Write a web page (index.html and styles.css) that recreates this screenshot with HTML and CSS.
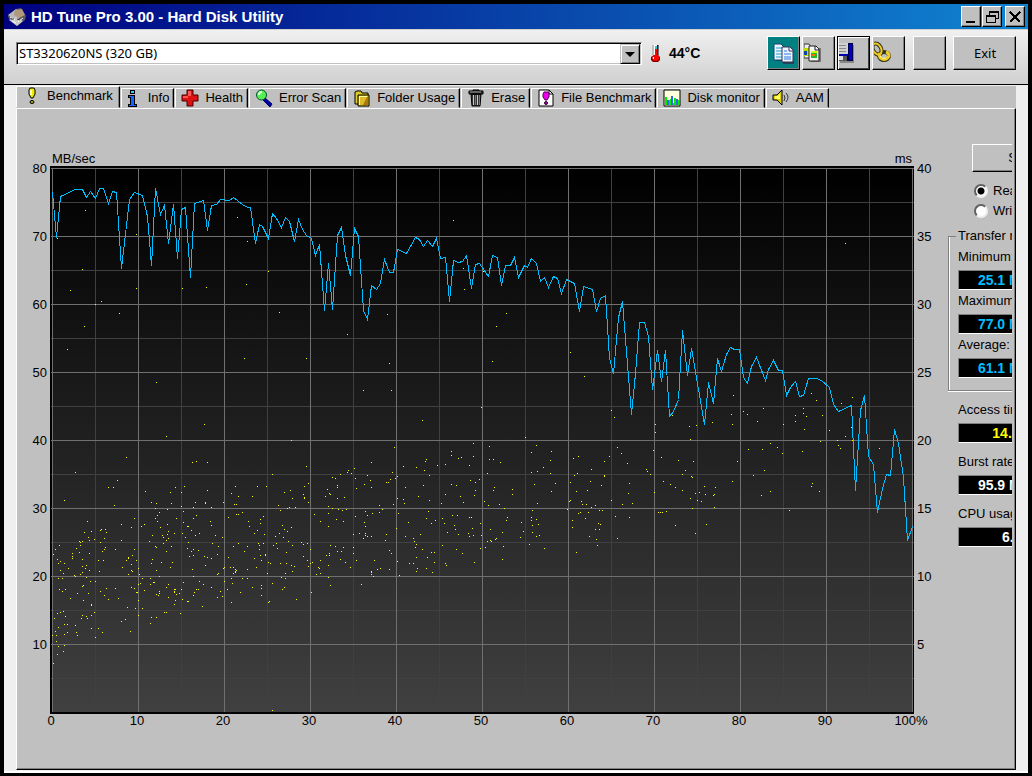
FILE: index.html
```html
<!DOCTYPE html>
<html lang="en">
<head>
    <meta charset="UTF-8">
    <meta name="viewport" content="width=device-width, initial-scale=1.0">
    <title>HD Tune Pro 3.00 - Hard Disk Utility</title>
    <link rel="stylesheet" href="styles.css">
</head>
<body>
    <div class="window">
        <header class="titlebar">
            <svg class="app-icon" viewBox="0 0 20 20">
                <path d="M1 9L9 2l5-1 5 8-1 4-8 6-8-7z" fill="#5a5a5a"/>
                <path d="M1 8l8-6 7 5-7 7z" fill="#b8b8b8"/>
                <path d="M8 3l7-1 3 6-6 3-5-3z" fill="#b0987c"/>
                <path d="M2 13l6-3 8 4-6 5z" fill="#c9c9c9"/>
                <path d="M3 10l5 3M11 15l5-4M5 14l4 2" stroke="#fff" fill="none"/>
                <path d="M4 12h3M10 12l3 1" stroke="#333" fill="none"/>
            </svg>
            <h1>HD Tune Pro 3.00 - Hard Disk Utility</h1>
            <div class="window-buttons">
                <button aria-label="Minimize"><svg viewBox="0 0 16 16"><path d="M3 12h9v2H3z"/></svg></button>
                <button aria-label="Restore"><svg viewBox="0 0 16 16"><path d="M5 2h10v8h-3v4H2V6h3zM6 4v2h6v3h2V4zM3 8v5h8V8z" fill-rule="evenodd"/></svg></button>
                <button class="close" aria-label="Close"><svg viewBox="0 0 16 16"><path d="M3 3l10 10M13 3L3 13" stroke="#000" stroke-width="2"/></svg></button>
            </div>
        </header>

        <div class="toolbar">
            <div class="drive">
                <select aria-label="Drive">
                    <option>ST3320620NS (320 GB)</option>
                </select>
                <span class="drive-arrow"></span>
            </div>
            <div class="temperature">
                <svg viewBox="0 0 11 18">
                    <path d="M4 1h4v10l2 2v3l-2 2H3l-2-2v-3l3-2z" fill="#7a0000"/>
                    <path d="M4 1h3v10H4z" fill="#fff"/>
                    <path d="M5 2h2v4H5z" fill="#2cd"/>
                    <path d="M5 5h3v6l1 2v2l-2 2H4l-2-2v-2l3-2z" fill="#f00"/>
                    <path d="M3 1v10M3 13v1" stroke="#999"/>
                    <path d="M8 1v10" stroke="#000"/>
                    <path d="M3 13h1v2H3z" fill="#fff"/>
                </svg>
                <span>44°C</span>
            </div>
            <div class="tools">
                <button class="tool copy-text" aria-label="Copy text">
                    <svg viewBox="0 0 24 24">
                        <path d="M5 5h8v15h10v3H12v-3H5z" fill="#245"/>
                        <path d="M3 3h7l3 3v13H3z" fill="#eaf6ff" stroke="#147"/>
                        <path d="M5 7h6M5 10h6M5 13h6M5 16h6" stroke="#29c"/>
                        <path d="M11 6h8l3 3v12H11z" fill="#eaf6ff" stroke="#335"/>
                        <path d="M18 6v4h4" fill="#fff" stroke="#335"/>
                        <path d="M13 10h3M13 13h7M13 16h7M13 18h7" stroke="#37d"/>
                    </svg>
                </button>
                <button class="tool" aria-label="Copy screenshot">
                    <svg viewBox="0 0 24 24">
                        <path d="M7 7h10v14H7z" fill="#777"/>
                        <path d="M0 3h5l2 3v11H0z" fill="#eee" stroke="#333"/>
                        <path d="M0 7h5v8H0z" fill="#bd0"/>
                        <path d="M0 10h3v4H0z" fill="#14a"/>
                        <path d="M5 5h7l3 3v12H5z" fill="#f4f4f4" stroke="#222"/>
                        <path d="M11 5v4h4" fill="none" stroke="#222"/>
                        <path d="M7 10h6v7H7z" fill="#2b2"/>
                        <path d="M7 10h6v2H7z" fill="#cf0"/>
                        <path d="M8 13h3v2H8z" fill="#e70"/>
                    </svg>
                </button>
                <button class="tool focused" aria-label="Save screenshot">
                    <svg viewBox="0 0 24 24">
                        <path d="M1 4h14v18H1z" fill="#888"/>
                        <path d="M0 2h14v18H0z" fill="#00004a"/>
                        <path d="M10 3h3v16h-3z" fill="#0000c8"/>
                        <path d="M0 2h9v11H0z" fill="#d0d0d0"/>
                        <path d="M0 4.500h7M0 7.500h7M0 10.500h7" stroke="#888"/>
                        <path d="M0 13h9v2H0z" fill="#00a"/>
                        <path d="M0 15h8v5H0z" fill="#555"/>
                        <path d="M0 15h4v4H0z" fill="#ddd"/>
                    </svg>
                </button>
                <button class="tool" aria-label="Options">
                    <svg viewBox="0 0 24 24">
                        <g fill="none">
                            <ellipse cx="3" cy="8" rx="4" ry="6" transform="rotate(-30 3 8)" stroke="#332" stroke-width="4"/>
                            <ellipse cx="10" cy="15" rx="5" ry="4" stroke="#332" stroke-width="4"/>
                            <ellipse cx="3" cy="8" rx="4" ry="6" transform="rotate(-30 3 8)" stroke="#ec2" stroke-width="2"/>
                            <path d="M6 12q-2 4 2 6t7-3q0-3-3-4" stroke="#ec2" stroke-width="3"/>
                            <path d="M6 15q2 4 6 2" stroke="#ff9"/>
                        </g>
                    </svg>
                </button>
                <button class="tool blank" aria-label="Extra"></button>
                <button class="tool exit">Exit</button>
            </div>
        </div>

        <main class="content">
            <nav class="tabs" role="tablist">
                <button class="tab active" role="tab" aria-selected="true">
                    <svg viewBox="0 0 18 18">
                        <path d="M7 1h4l1 2v4l-2 4H8L6 7V3z" fill="#ee0" stroke="#000"/>
                        <path d="M7 3h2v5H7z" fill="#ffb"/>
                        <ellipse cx="9" cy="15" rx="2" ry="1.500" fill="#aa0" stroke="#000"/>
                    </svg>
                    Benchmark
                </button>
                <button class="tab narrow" role="tab">
                    <svg viewBox="0 0 12 18">
                        <path d="M3 1h5v4H3zM1 6h7v9h2v3H1v-3h2V9H1z" fill="#000"/>
                        <path d="M4 2h3v2H4z" fill="#3cf"/>
                        <path d="M2 7h5v9h2v1H2v-1h2V8H2z" fill="#16f"/>
                    </svg>
                    Info
                </button>
                <button class="tab" role="tab">
                    <svg viewBox="0 0 18 18">
                        <path d="M6 1h6v5h5v6h-5v5H6v-5H1V6h5z" fill="#d11" stroke="#400"/>
                        <path d="M7 2h3v5H2v2h5V2" fill="#f55"/>
                    </svg>
                    Health
                </button>
                <button class="tab" role="tab">
                    <svg viewBox="0 0 18 18">
                        <path d="M10 9l7 6-2 3-7-7z" fill="#00a" stroke="#005"/>
                        <circle cx="6.500" cy="6" r="5" fill="#5e5" stroke="#052"/>
                        <path d="M4 6q0-3 3-3" fill="none" stroke="#dfd" stroke-width="2"/>
                    </svg>
                    Error Scan
                </button>
                <button class="tab" role="tab">
                    <svg viewBox="0 0 18 18">
                        <path d="M2 15V3l2-1h4l1 2h6v11z" fill="#dc2" stroke="#000"/>
                        <path d="M5 6h11v11H5z" fill="#db2" stroke="#000"/>
                        <path d="M6 7h8v1H6zM6 7h1v9H6z" fill="#ff9"/>
                        <path d="M14 8h1v8h-5z" fill="#a71"/>
                    </svg>
                    Folder Usage
                </button>
                <button class="tab" role="tab">
                    <svg viewBox="0 0 18 18">
                        <path d="M2 2h4V1h6v1h4v3H2zM4 5h10l-1 12H5z" fill="#333" stroke="#000"/>
                        <path d="M3 3h11" stroke="#999"/>
                        <path d="M6.500 6v10M10.500 6v10" stroke="#ccc"/>
                        <path d="M8.500 6v10M12.500 6v10" stroke="#777"/>
                    </svg>
                    Erase
                </button>
                <button class="tab" role="tab">
                    <svg viewBox="0 0 18 18">
                        <path d="M2 1h10l4 4v12H2z" fill="#fff" stroke="#000"/>
                        <path d="M12 1v4h4" fill="none" stroke="#000"/>
                        <path d="M7 3h4l1 2v3l-2 3H8L6 8V5z" fill="#e0e" stroke="#505"/>
                        <circle cx="9" cy="14" r="1.500" fill="#a0a" stroke="#303"/>
                    </svg>
                    File Benchmark
                </button>
                <button class="tab" role="tab">
                    <svg viewBox="0 0 18 18">
                        <path d="M1 1h16v16H1z" fill="#ffd" stroke="#000"/>
                        <path d="M2 8h2v3h3v-1h2v4h2V9h2v2h3v5H2z" fill="#0e0"/>
                        <path d="M4 11h2v5H4zM8 7h2v9H8zM13 10h2v6h-2z" fill="#36e"/>
                    </svg>
                    Disk monitor
                </button>
                <button class="tab" role="tab">
                    <svg viewBox="0 0 18 18">
                        <path d="M1 6h4l5-5v15l-5-5H1z" fill="#dc0" stroke="#000"/>
                        <path d="M3 7h3l2-3v6H3z" fill="#ff6"/>
                        <path d="M12 6q2 3 0 6M14 4q4 4 0 9" fill="none" stroke="#333"/>
                    </svg>
                    AAM
                </button>
            </nav>

            <section class="panel">
                <div class="units">
                    <span>MB/sec</span>
                    <span>ms</span>
                </div>
                <div class="scale scale-left">
                    <span>80</span><span>70</span><span>60</span><span>50</span><span>40</span><span>30</span><span>20</span><span>10</span>
                </div>
                <svg id="chart" viewBox="-2 -2 864 548" preserveAspectRatio="none">
                    <defs>
                        <linearGradient id="plotFill" x1="0" y1="0" x2="0" y2="1">
                            <stop offset="0" stop-color="#000"/>
                            <stop offset="1" stop-color="#404040"/>
                        </linearGradient>
                    </defs>
                    <rect x="-2" y="-2" width="864" height="548" fill="#000"/>
                    <rect x="0" y="0" width="860" height="544" fill="url(#plotFill)"/>
                    <path id="minorGrid"/>
                    <path id="majorGrid"/>
                    <path id="accessDots"/>
                    <polyline id="transferLine"/>
                </svg>
                <div class="scale scale-right">
                    <span>40</span><span>35</span><span>30</span><span>25</span><span>20</span><span>15</span><span>10</span><span>5</span>
                </div>
                <div class="scale-bottom">
                    <span>0</span><span>10</span><span>20</span><span>30</span><span>40</span><span>50</span><span>60</span><span>70</span><span>80</span><span>90</span><span>100%</span>
                </div>

                <aside class="results">
                    <button class="start">Start</button>
                    <label class="mode"><input type="radio" name="mode" checked>Read</label>
                    <label class="mode"><input type="radio" name="mode">Write</label>
                    <fieldset>
                        <legend>Transfer rate</legend>
                        <div class="result">Minimum:<output class="rate">25.1 MB/sec</output></div>
                        <div class="result">Maximum:<output class="rate">77.0 MB/sec</output></div>
                        <div class="result">Average:<output class="rate">61.1 MB/sec</output></div>
                    </fieldset>
                    <div class="result single">Access time:<output class="access">14.2 ms</output></div>
                    <div class="result single">Burst rate:<output>95.9 MB/sec</output></div>
                    <div class="result single">CPU usage:<output>6.0%</output></div>
                </aside>
            </section>
        </main>
    </div>

    <script src="chart.js"></script>
</body>
</html>
```

FILE: styles.css
```css
* {
    box-sizing: border-box;
}

body {
    margin: 0;
    background: #000;
    color: #000;
    font-family: "Liberation Sans", Arial, sans-serif;
    font-size: 13px;
    line-height: 14px;
}

button {
    font: inherit;
    color: inherit;
    padding: 0;
}

.window {
    display: flex;
    flex-direction: column;
    min-height: 100vh;
    border: 4px solid #000;
    border-bottom-width: 3px;
    background: #efefef;
}

/* Title bar */
.titlebar {
    display: flex;
    align-items: center;
    height: 26px;
    padding: 0 3px;
    background: linear-gradient(to right, #000080, #1084d0);
    border-bottom: 1px solid #d0d0d0;
    color: #fff;
}

.titlebar h1 {
    flex: 1;
    margin: 0 0 0 4px;
    font-size: 15px;
    line-height: 20px;
}

.app-icon {
    width: 20px;
    height: 20px;
}

.window-buttons {
    display: flex;
    gap: 1px;
}

.window-buttons button {
    width: 20px;
    height: 21px;
    background: #c0c0c0;
    border: 1px solid;
    border-color: #fff #000 #000 #fff;
    box-shadow: inset -1px -1px #808080;
}

.window-buttons .close {
    margin-left: 2px;
}

.window-buttons svg {
    display: block;
    width: 16px;
    height: 16px;
    margin: auto;
    shape-rendering: crispEdges;
}

/* Toolbar */
.toolbar {
    display: flex;
    align-items: center;
    padding: 6px 12px 14px;
    background: linear-gradient(#f0f0f0, #d0d0d0);
    border-bottom: 1px solid #000;
}

.drive {
    position: relative;
    flex: 1;
}

.drive select {
    display: block;
    appearance: none;
    width: 100%;
    height: 23px;
    padding: 0 24px 0 2px;
    background: #fff;
    color: #000;
    border: 1px solid;
    border-color: #808080 #fff #fff #808080;
    border-radius: 0;
    box-shadow: inset 1px 1px #000, inset -1px -1px #c0c0c0;
    font-family: "Noto Sans", sans-serif;
    font-size: 13px;
}

.drive-arrow {
    position: absolute;
    top: 2px;
    right: 2px;
    width: 20px;
    height: 20px;
    background: #c0c0c0;
    border: 1px solid;
    border-color: #c0c0c0 #000 #000 #c0c0c0;
    box-shadow: inset 1px 1px #fff, inset -1px -1px #808080;
    pointer-events: none;
}

.drive-arrow::after {
    content: "";
    position: absolute;
    top: 7px;
    left: 4px;
    border: 5px solid transparent;
    border-top: 5px solid #000;
    border-bottom: 0;
}

.temperature {
    display: flex;
    align-items: center;
    gap: 8px;
    width: 125px;
    padding-left: 8px;
    font-size: 14px;
    font-weight: bold;
}

.temperature svg {
    width: 11px;
    height: 18px;
}

.tools {
    display: flex;
    gap: 2px;
}

.tool {
    width: 33px;
    height: 34px;
    padding-left: 1px;
    background: #c0c0c0;
    border: 1px solid;
    border-color: #fff #000 #000 #fff;
    box-shadow: inset -1px -1px #808080;
    font-family: "Noto Sans", sans-serif;
}

.tool svg {
    display: block;
    width: 24px;
    height: 24px;
    overflow: hidden;
}

.copy-text {
    padding-left: 3px;
    background: #008080;
}

.focused {
    border-color: #000;
    box-shadow: inset 1px 1px #fff, inset -1px -1px #404040;
}

.blank {
    margin-left: 6px;
}

.exit {
    width: 63px;
    margin-left: 5px;
}

/* Tabs */
.content {
    display: flex;
    flex-direction: column;
    flex: 1;
    padding: 1px 12px;
    border-bottom: 2px solid #fff;
}

.tabs {
    display: flex;
    align-items: flex-end;
    height: 22px;
    background: #c0c0c0;
}

.tab {
    display: flex;
    align-items: center;
    gap: 6px;
    height: 20px;
    padding: 0 4px 0 5px;
    background: #c0c0c0;
    border: 1px solid;
    border-color: #fff #000 #c0c0c0 #fff;
    box-shadow: inset -1px 0 #808080, 1px 0 #c0c0c0;
    white-space: nowrap;
    margin-right: 1px;
}

.tab.active {
    height: 22px;
    padding: 0 6px 2px;
}

.tab svg {
    width: 18px;
    height: 18px;
}

.tab.narrow svg {
    width: 12px;
}

.tab.narrow {
    gap: 9px;
}

/* Benchmark panel */
.panel {
    display: grid;
    grid-template-columns: 33px 1fr 34px 64px;
    grid-template-rows: 14px 1fr 14px;
    flex: 1;
    padding: 43px 3px 41px 0;
    background: #c0c0c0;
    border: 1px solid;
    border-color: #fff #000 #000 #fff;
    box-shadow: inset -1px -1px #808080;
}

.units {
    grid-column: 2;
    display: flex;
    justify-content: space-between;
    padding: 0 2px;
}

.scale {
    grid-row: 2;
    display: flex;
    flex-direction: column;
    margin: -4px 0 8px;
}

.scale span {
    flex: 1;
}

.scale-left {
    grid-column: 1;
    padding-right: 3px;
    text-align: right;
}

.scale-right {
    grid-column: 3;
    padding-left: 3px;
}

#chart {
    grid-column: 2;
    grid-row: 2;
    display: block;
    width: 100%;
    height: 100%;
    min-height: 0;
}

.scale-bottom {
    grid-column: 2;
    grid-row: 3;
    display: flex;
    margin: 0 -40px 0 -42px;
    text-align: center;
}

.scale-bottom span {
    flex: 1;
}

#chart path,
#chart polyline {
    fill: none;
    shape-rendering: crispEdges;
}

#minorGrid {
    stroke: #404040;
}

#majorGrid {
    stroke: #707070;
}

#accessDots {
    stroke: #ffff00;
}

#transferLine {
    stroke: #00bfff;
}

/* Results column, cut off by the panel edge */
.results {
    grid-column: 4;
    grid-row: 1 / 4;
    overflow: hidden;
    margin-top: -8px;
    white-space: nowrap;
}

.start {
    display: block;
    width: 100px;
    height: 28px;
    margin: 0 0 11px 24px;
    background: #c0c0c0;
    border: 1px solid;
    border-color: #fff #000 #000 #fff;
    box-shadow: inset -1px -1px #808080;
}

.mode {
    display: flex;
    align-items: center;
    gap: 5px;
    height: 16px;
    margin: 0 0 4px 26px;
}

.mode input {
    flex-shrink: 0;
    appearance: none;
    width: 14px;
    height: 14px;
    margin: 0;
    background: #fff;
    border: 2px solid;
    border-color: #606060 #f0f0f0 #f0f0f0 #606060;
    border-radius: 50%;
}

.mode input:checked {
    background: radial-gradient(#000 3px, #fff 4px);
}

fieldset {
    width: 140px;
    height: 162px;
    margin: 10px 0 12px;
    padding: 0 9px;
    border: 1px solid #808080;
    box-shadow: inset 1px 0 #fff, 0 1px #fff;
}

legend {
    margin-left: -2px;
    padding: 0 2px;
}

.result {
    width: 120px;
    margin-top: 7px;
}

.result output {
    display: block;
    height: 20px;
    margin-top: 6px;
    background: #000;
    border: 1px solid;
    border-color: #808080 #fff #fff #808080;
    color: #fff;
    font-size: 14px;
    font-weight: bold;
    line-height: 18px;
    text-align: center;
}

fieldset .result + .result {
    margin-top: 4px;
}

.result.single {
    margin: 0 0 12px 10px;
}

.result .rate {
    color: #00bfff;
}

.result .access {
    color: #ffff00;
}
```

FILE: chart.js
```js
// Plot area is 860 x 544: 86 units per 10%, 68 units per 10 MB/sec.
const WIDTH = 860;
const HEIGHT = 544;

// Values are stored in thirds of a unit, relative to the block's origin.
const transfer = [
    { x: -52, y: -28, data: "157,157 169,292 181,168 227,148 248,148 260,172 272,154 287,175 299,145 311,145 326,190 338,154 348,158 365,385 389,178 404,157 426,166 443,230 454,376 467,145 481,222 493,197 506,310 520,194 532,355 545,208 557,203 572,412 584,190 610,182 623,271 635,197 650,193 661,178 688,181 701,172 728,194 741,202" },
    { x: 198, y: -8, data: "2,143 17,250 29,194 38,199 56,235 68,161 80,175 95,202 107,173 118,184 134,244 146,179 158,208 170,227 183,236 197,286 209,254 224,451 236,311 248,448 263,226 275,203 287,286 302,346 314,206 325,230 341,452 353,478 365,377 380,388 391,370 404,299 419,337 431,337 443,268 470,280 497,232 509,239 521,259 533,241 547,259 560,235 572,296 586,293 599,424 611,301 626,307 638,304 650,287 665,385 677,314 689,310 715,349 728,286 743,293 755,376 767,316 781,316 794,293 806,352 822,316 832,322 845,296 859,310 872,364 884,352 896,382" },
    { x: 448, y: 52, data: "161,169 172,175 185,220 199,179 223,190 238,274 251,199 277,209 290,274 302,235 316,227 329,415 340,460 356,292 368,244 394,583 406,460 418,307 433,307 445,349 458,508 473,391 485,485 496,391 509,589 521,575 535,538 548,331 562,466 575,386 613,613 626,487 640,550 653,415 665,455 680,404 692,382 704,388" },
    { x: 648, y: 132, data: "119,149 131,232 143,250 155,200 170,173 197,241 206,208 220,182 234,212 248,212 260,286 272,262 287,244 299,290 311,286 325,236 350,236 365,242 389,262 401,314 415,334 455,316 467,571 481,332 493,287 506,470 520,494 533,637 547,565 559,523 571,527 584,388 596,430 611,532 623,721 637,680" }
];

const access = [
    { x: -52, y: -28, data: "334,49 256,211 712,232 172,295 409,283 742,304 247,388 211,451 409,445 547,445 619,442 739,433 805,394 286,493 304,484 358,520 838,517 253,559 202,628 733,655" },
    { x: -52, y: -168, data: "468,1146 612,1272 498,1308 225,1416 378,1371 351,1440 324,1461 339,1461 435,1473 588,1383 576,1386 621,1386 816,1422 798,1458 771,1458 705,1458 693,1479 714,1488 756,1488 852,1476 552,1458 543,1476 525,1461 510,1476 621,1470 1089,1170 1173,1170 1443,1221 2535,729" },
    { x: 198, y: -8, data: "610,181 640,325 643,388 700,334 88,457 292,523 412,463 769,460 739,499 727,604 169,595 418,610" },
    { x: 448, y: 52, data: "211,397 253,469 334,571 343,592 517,586 466,613 466,637 568,619 571,658 589,616 637,607 76,652" },
    { x: 648, y: 132, data: "100,286 94,343 97,373 37,367 130,334 142,343 190,325 172,364 250,373 286,346 286,364 310,325 310,340 319,349 313,388 334,280 349,301 367,346 388,391 424,310 457,292 454,382 436,409 412,421 415,436 421,445 457,421 361,424 307,454 247,460 232,442 211,430 187,448 145,448 112,484 193,511 160,526 97,544 184,586 211,574 337,550 334,559 358,574 268,631 538,445 13,559 16,583 4,604 46,562 43,583 40,586 43,622 19,673" },
    { x: -52, y: 332, data: "193,1 343,16 454,7 469,10 466,25 514,10 502,28 478,37 472,46 466,55 472,64 502,73 481,82 433,73 424,79 403,55 364,73 394,82 262,64 253,97 274,94 265,112 268,121 283,118 301,91 304,88 316,88 319,97 313,115 301,127 316,142 313,148 307,154 346,148 364,121 238,124 247,124 241,127 241,136 229,145 238,157 217,160 217,169 217,175 268,160 178,136 166,148 160,163 172,178 181,184 175,190 193,190 205,205 247,178 259,196 256,205 247,199 247,217 241,223 268,211 181,211 190,220 175,235 187,235 223,226 226,229 259,232 271,244 286,244 298,214 295,181 310,181 250,256 247,259 178,268 196,268 187,274 232,280 265,280 211,295 250,301 301,274 319,265 313,286 325,298 355,295 346,265 274,313 274,316 382,322 406,325 427,325 172,340 181,337 190,334 196,349 163,355 247,346 244,355 259,349 262,355 274,346 283,337 193,373 202,373 226,376 175,382 166,394 169,406 193,403 202,397 229,397 232,406 274,385 295,385 307,397 286,412 169,424 175,439 193,436 190,454 172,463 160,490 157,406 364,364 376,358 391,394 415,346 451,370 454,352 469,352 493,337 499,337 541,340 385,172 385,175 379,181 394,193 409,181 397,166 403,148 367,202 385,223 394,211 397,214 415,205 418,223 427,235 451,235 421,250 415,253 394,262 403,265 433,271 409,277 412,277 415,301 451,253 460,247 463,247 478,229 469,211 454,190 457,178 484,187 517,187 511,202 466,139 469,142 448,124 457,106 487,106 490,112 490,130 499,121 502,103 505,94 505,115 523,100 514,139 499,154 547,100 556,112 565,127 529,55 544,19 550,34 550,67 562,79 565,79 574,91 580,55 589,46 580,22 586,7 616,7 616,10 634,22 631,64 634,76 598,100 586,106 562,145 574,154 580,148 568,169 580,166 595,151 613,169 622,172 634,175 652,163 655,139 637,130 646,106 667,112 670,7 703,13 709,13 727,37 709,43 715,43 685,52 745,64 748,79 772,91 763,100 790,49 781,58 781,70 793,103 775,130 778,136 790,130 778,148 796,163 796,166 781,166 784,181 763,175 769,202 733,154 742,139 715,130 700,139 685,172 616,196 577,208 580,229 550,247 598,244 610,253 595,268 589,268 583,277 580,286 562,304 565,304 547,298 544,268 523,268 526,268 523,274 523,277 529,283 538,280 526,301 523,313 499,262 505,253 478,274 478,280 475,286 469,283 505,292 607,319 634,262 661,274 652,292 667,289 682,268 673,244 652,223 655,220 670,205 673,202 691,202 700,202 706,208 709,211 706,214 706,217 700,220 694,235 742,208 742,235 727,235 697,250 721,277 694,307 757,262 784,256 784,265 784,286 805,307 808,304 802,220 805,187 811,190 817,250 841,190 859,190 859,157 832,145 820,136 829,130 826,109 838,100 850,112 853,88 847,76 874,82 862,94 865,124 877,136 874,196 883,199 877,214 856,220 844,232 856,235 847,268 853,262 889,298 835,16 841,31 862,25 868,22 886,22 817,631" },
    { x: 238, y: 252, data: "397,1 4,61 49,139 55,190 43,199 1,211 40,223 7,235 43,232 43,235 55,247 16,262 4,322 34,367 40,373 52,370 7,376 61,388 40,409 52,421 61,430 67,427 55,439 4,436 13,439 7,454 19,538 64,517 79,463 91,460 85,442 88,445 91,421 115,436 109,406 118,406 118,400 121,376 136,379 142,394 154,394 160,382 151,418 166,427 181,442 115,472 121,496 73,283 91,304 115,319 115,280 139,298 160,304 127,265 115,259 145,268 157,271 169,268 142,235 163,232 106,229 118,220 121,223 112,208 142,202 142,196 136,175 127,172 151,163 172,157 175,151 184,160 193,145 196,175 232,166 241,181 223,193 244,202 199,205 244,127 313,82 307,157 301,178 316,175 322,169 289,187 295,187 340,139 379,142 403,151 409,118 406,124 442,136 418,166 400,196 346,202 385,229 340,238 343,250 322,235 310,253 418,241 268,256 277,268 268,277 247,280 226,274 232,286 196,289 223,307 226,319 208,340 190,343 226,340 226,346 232,349 244,349 220,355 190,382 190,400 199,421 253,421 289,343 286,361 298,391 304,400 319,325 325,280 355,307 346,349 391,343 370,355 373,364 379,373 376,382 397,388 412,412 379,412 358,430 370,430 382,445 379,454 409,445 427,457 433,427 424,397 433,397 322,424 328,466 298,448 271,445 262,448 244,454 244,457 244,463 250,469 214,493 415,274 409,295 424,310 436,301 466,133 484,94 484,106 505,115 514,112 550,70 550,109 538,136 541,181 556,187 568,178 556,211 553,226 520,247 511,229 499,196 484,193 466,223 454,250 487,286 502,286 457,295 463,310 493,316 496,328 472,337 505,343 538,292 544,292 571,310 547,325 535,340 538,349 550,346 574,346 571,385 586,382 553,427 517,400 499,388 457,376 466,430 469,436 598,79 598,118 610,118 631,127 592,160 613,202 610,211 667,208 667,223 583,244 595,256 628,253 643,265 652,292 649,301 694,307 700,334 691,352 637,337 601,328 592,364 601,361 604,364 616,358 619,355 640,379 637,418 706,52 739,76 724,97 784,94 781,121 760,142 742,154 724,157 781,160 733,193 796,190 784,214 742,250 727,271 724,292 724,301 739,298 745,313 727,316 727,337 739,349 748,346 718,373 763,385 850,115 865,109 904,148 853,166 862,160 841,187 901,184 934,196 943,166 943,169 943,124 958,109 982,82 994,100 1012,130 859,214 892,211 838,244 841,241 874,244 877,253 889,253 904,262 916,256 832,268 865,280 871,277 895,277 886,295 847,301 847,322 928,271 937,271 925,310 931,313 916,328 928,328 898,349 919,358 922,376 859,397 964,241 997,253 1027,250 1015,220 1018,190 976,289 1018,292 982,355 1069,148 1072,154 1081,163 1090,91 1093,217 1114,112 1165,121 1210,124 1186,151 1177,163 1204,169 1207,172 1120,184 1141,193 1156,202 1177,211 1201,235 1216,220 1228,217 1222,241 1234,244 1246,223 1243,199 1207,265 1105,277 1111,277 1117,277 1129,274 1156,316 1216,340 1096,13 1096,37 1198,19 1219,16 1201,58" }
];

function points(blocks) {
    return blocks.flatMap(block => block.data.split(" ").map(pair => {
        const [px, py] = pair.split(",").map(Number);
        return [block.x + Math.floor(px / 3), block.y + Math.floor(py / 3)];
    }));
}

function grid(step, rowStep) {
    let d = "";
    for (let x = 0; x <= WIDTH; x += step) {
        d += `M${x + 0.5} 0V${HEIGHT}`;
    }
    for (let y = 0; y < HEIGHT; y += rowStep) {
        d += `M-1 ${y + 0.5}H${WIDTH + 2}`;
    }
    return d;
}

document.getElementById("minorGrid").setAttribute("d", grid(43, 34));
document.getElementById("majorGrid").setAttribute("d", grid(86, 68));

document.getElementById("accessDots").setAttribute("d",
    points(access).map(([x, y]) => `M${x} ${y + 0.5}h1`).join(""));

document.getElementById("transferLine").setAttribute("points",
    points(transfer).map(([x, y]) => `${x + 0.5},${y + 0.5}`).join(" "));
```
